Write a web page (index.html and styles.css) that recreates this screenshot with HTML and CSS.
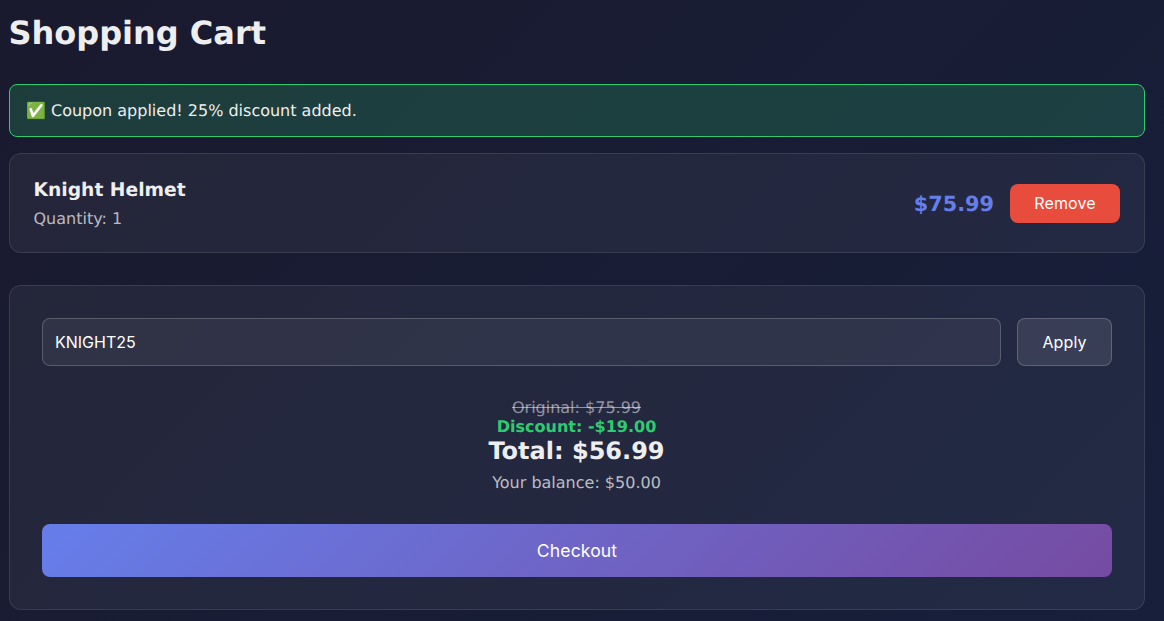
FILE: index.html
```html
<!DOCTYPE html>
<html lang="en">
<head>
    <meta charset="UTF-8">
    <meta name="viewport" content="width=device-width, initial-scale=1.0">
    <title>Shopping Cart</title>
    <link rel="stylesheet" href="styles.css">
</head>
<body>
    <div class="container">
        <h1>Shopping Cart</h1>

        <div class="alert">✅ Coupon applied! 25% discount added.</div>

        <!-- Cart items -->
        <div class="cart-item">
            <div class="item-info">
                <div class="item-name">Knight Helmet</div>
                <div class="item-qty">Quantity: 1</div>
            </div>
            <div class="item-actions">
                <span class="item-price">$75.99</span>
                <button class="btn-remove">Remove</button>
            </div>
        </div>

        <!-- Summary -->
        <div class="summary">
            <div class="coupon-form">
                <input class="coupon-input" type="text" value="KNIGHT25">
                <button class="btn-apply">Apply</button>
            </div>

            <div class="totals">
                <div class="original">Original: $75.99</div>
                <div class="discount">Discount: -$19.00</div>
                <div class="total">Total: $56.99</div>
                <div class="balance">Your balance: $50.00</div>
            </div>

            <button class="btn-checkout">Checkout</button>
        </div>
    </div>
</body>
</html>
```

FILE: styles.css
```css
* {
    box-sizing: border-box;
}

html, body {
    height: 100%;
}

body {
    margin: 0;
    padding: 14px 19px 11px 9px;
    background: linear-gradient(135deg, #1a1a2e 0%, #171f3b 100%);
    color: #eeeeee;
    font-family: "DejaVu Sans", sans-serif;
    text-rendering: geometricPrecision;
    overflow: hidden;
}

h1 {
    margin: 0 0 32px -0.6px;
    font-size: 32px;
    line-height: 38px;
    font-weight: bold;
}

.alert {
    padding: 16px;
    margin-bottom: 16px;
    background: rgba(46, 204, 113, 0.2);
    border: 1px solid #2ecc71;
    border-radius: 8px;
    font-size: 16px;
    line-height: 19px;
}

.cart-item {
    display: flex;
    justify-content: space-between;
    align-items: center;
    padding: 24px;
    margin-bottom: 32px;
    background: rgba(255, 255, 255, 0.05);
    border: 1px solid rgba(255, 255, 255, 0.1);
    border-radius: 12px;
}

.item-info {
    margin-left: -0.5px;
}

.item-name {
    font-size: 18.72px;
    line-height: 25px;
    font-weight: bold;
    margin-bottom: 6px;
}

.item-qty {
    font-size: 16px;
    line-height: 19px;
    color: rgba(255, 255, 255, 0.7);
}

.item-actions {
    display: flex;
    align-items: center;
    gap: 16px;
}

.item-price {
    padding-top: 2px;
    font-size: 20.8px;
    line-height: 26px;
    font-weight: bold;
    color: #667eea;
}

button {
    font-family: Inter, sans-serif;
    font-size: 16px;
    line-height: 19px;
    letter-spacing: 0.1px;
    color: #ffffff;
    cursor: pointer;
}

.btn-remove {
    width: 110px;
    padding: 10px 0;
    background: #e74c3c;
    border: none;
    border-radius: 8px;
}

.summary {
    padding: 32px;
    background: rgba(255, 255, 255, 0.05);
    border: 1px solid rgba(255, 255, 255, 0.1);
    border-radius: 12px;
}

.coupon-form {
    display: flex;
    gap: 16px;
    margin-bottom: 32px;
}

.coupon-input {
    flex: 1;
    height: 48px;
    padding: 12px;
    background: rgba(255, 255, 255, 0.06);
    border: 1px solid rgba(255, 255, 255, 0.2);
    border-radius: 8px;
    font-family: Inter, sans-serif;
    font-size: 16px;
    color: #ffffff;
}

.btn-apply {
    width: 95px;
    padding: 0;
    background: rgba(255, 255, 255, 0.1);
    border: 1px solid rgba(255, 255, 255, 0.2);
    border-radius: 8px;
}

.totals {
    padding-right: 1px;
    text-align: center;
    margin-bottom: 32px;
}

.original {
    font-size: 16px;
    line-height: 19px;
    color: rgba(255, 255, 255, 0.5);
    text-decoration: line-through;
}

.discount {
    font-size: 16px;
    line-height: 19px;
    font-weight: bold;
    color: #2ecc71;
}

.total {
    font-size: 24px;
    line-height: 30px;
    font-weight: bold;
}

.balance {
    margin-top: 7px;
    font-size: 16px;
    line-height: 19px;
    color: rgba(255, 255, 255, 0.7);
}

.btn-checkout {
    display: block;
    width: 100%;
    padding: 16px;
    background: linear-gradient(135deg, #667eea 0%, #764ba2 100%);
    border: none;
    border-radius: 8px;
    font-size: 17.6px;
    line-height: 21px;
}
```
